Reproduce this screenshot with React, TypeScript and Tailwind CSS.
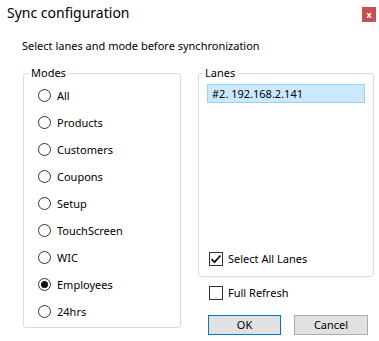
import React from 'react';

const modes = ['All', 'Products', 'Customers', 'Coupons', 'Setup', 'TouchScreen', 'WIC', 'Employees', '24hrs'];

function Radio({ label, checked }: { label: string; checked?: boolean }) {
  return (
    <div className="h-[27px] flex items-center gap-[6px]">
      <span className="w-[13px] h-[13px] rounded-full border border-[#333] bg-white flex items-center justify-center">
        {checked && <span className="w-[7px] h-[7px] rounded-full bg-[#111]" />}
      </span>
      <span>{label}</span>
    </div>
  );
}

function Checkbox({ label, checked }: { label: string; checked?: boolean }) {
  return (
    <div className="flex items-center gap-[5px]">
      <span className="w-[14px] h-[14px] border border-[#333] bg-white flex items-center justify-center">
        {checked && (
          <svg width="12" height="12" viewBox="0 0 12 12">
            <path d="M1.5 6.2 L4.5 9.2 L10.5 2.5" fill="none" stroke="#111" strokeWidth="1.8" />
          </svg>
        )}
      </span>
      <span>{label}</span>
    </div>
  );
}

export default function App() {
  return (
    <div
      className="w-[379px] h-[341px] bg-white text-black text-[11px] leading-[16px] overflow-hidden"
      style={{ fontFamily: '"Segoe UI", "Noto Sans", sans-serif' }}
    >
      {/* Title bar */}
      <div className="h-[30px] flex items-center justify-between pl-[7px] pr-[3px]">
        <span className="text-[14px] leading-[20px] -mt-[4px]">Sync configuration</span>
        <button className="w-[14px] h-[15px] bg-[#c75050] text-white text-[9px] leading-[15px] font-bold flex items-center justify-center -mt-[1px]">
          x
        </button>
      </div>

      <div className="pl-[22px] mt-[8px]">Select lanes and mode before synchronization</div>

      <div className="flex pl-[23px] mt-[11px] gap-[17px]">
        {/* Modes */}
        <fieldset className="w-[158px] h-[263px] border border-[#dcdcdc] rounded-[3px]">
          <legend className="ml-[5px] px-[2px]">Modes</legend>
          <div className="pl-[14px] pt-[1px]">
            {modes.map((m) => (
              <Radio key={m} label={m} checked={m === 'Employees'} />
            ))}
          </div>
        </fieldset>

        {/* Right column */}
        <div className="w-[176px] flex flex-col">
          <fieldset className="h-[212px] border border-[#dcdcdc] rounded-[3px]">
            <legend className="ml-[4px] px-[2px]">Lanes</legend>
            <div className="h-[194px] px-[8px] pt-[3px] flex flex-col">
              <div className="h-[19px] bg-[#cce8ff] border border-[#99d1ff] pl-[4px] flex items-center">
                #2. 192.168.2.141
              </div>
              <div className="flex-1" />
              <div className="pl-[2px] pb-[8px]">
                <Checkbox label="Select All Lanes" checked />
              </div>
            </div>
          </fieldset>

          <div className="pl-[11px] mt-[8px]">
            <Checkbox label="Full Refresh" />
          </div>

          <div className="flex gap-[13px] pl-[10px] mt-[14px]">
            <button className="w-[73px] h-[20px] bg-[#e1e1e1] border border-[#0078d7]">OK</button>
            <button className="w-[74px] h-[20px] bg-[#e1e1e1] border border-[#adadad]">Cancel</button>
          </div>
        </div>
      </div>
    </div>
  );
}
